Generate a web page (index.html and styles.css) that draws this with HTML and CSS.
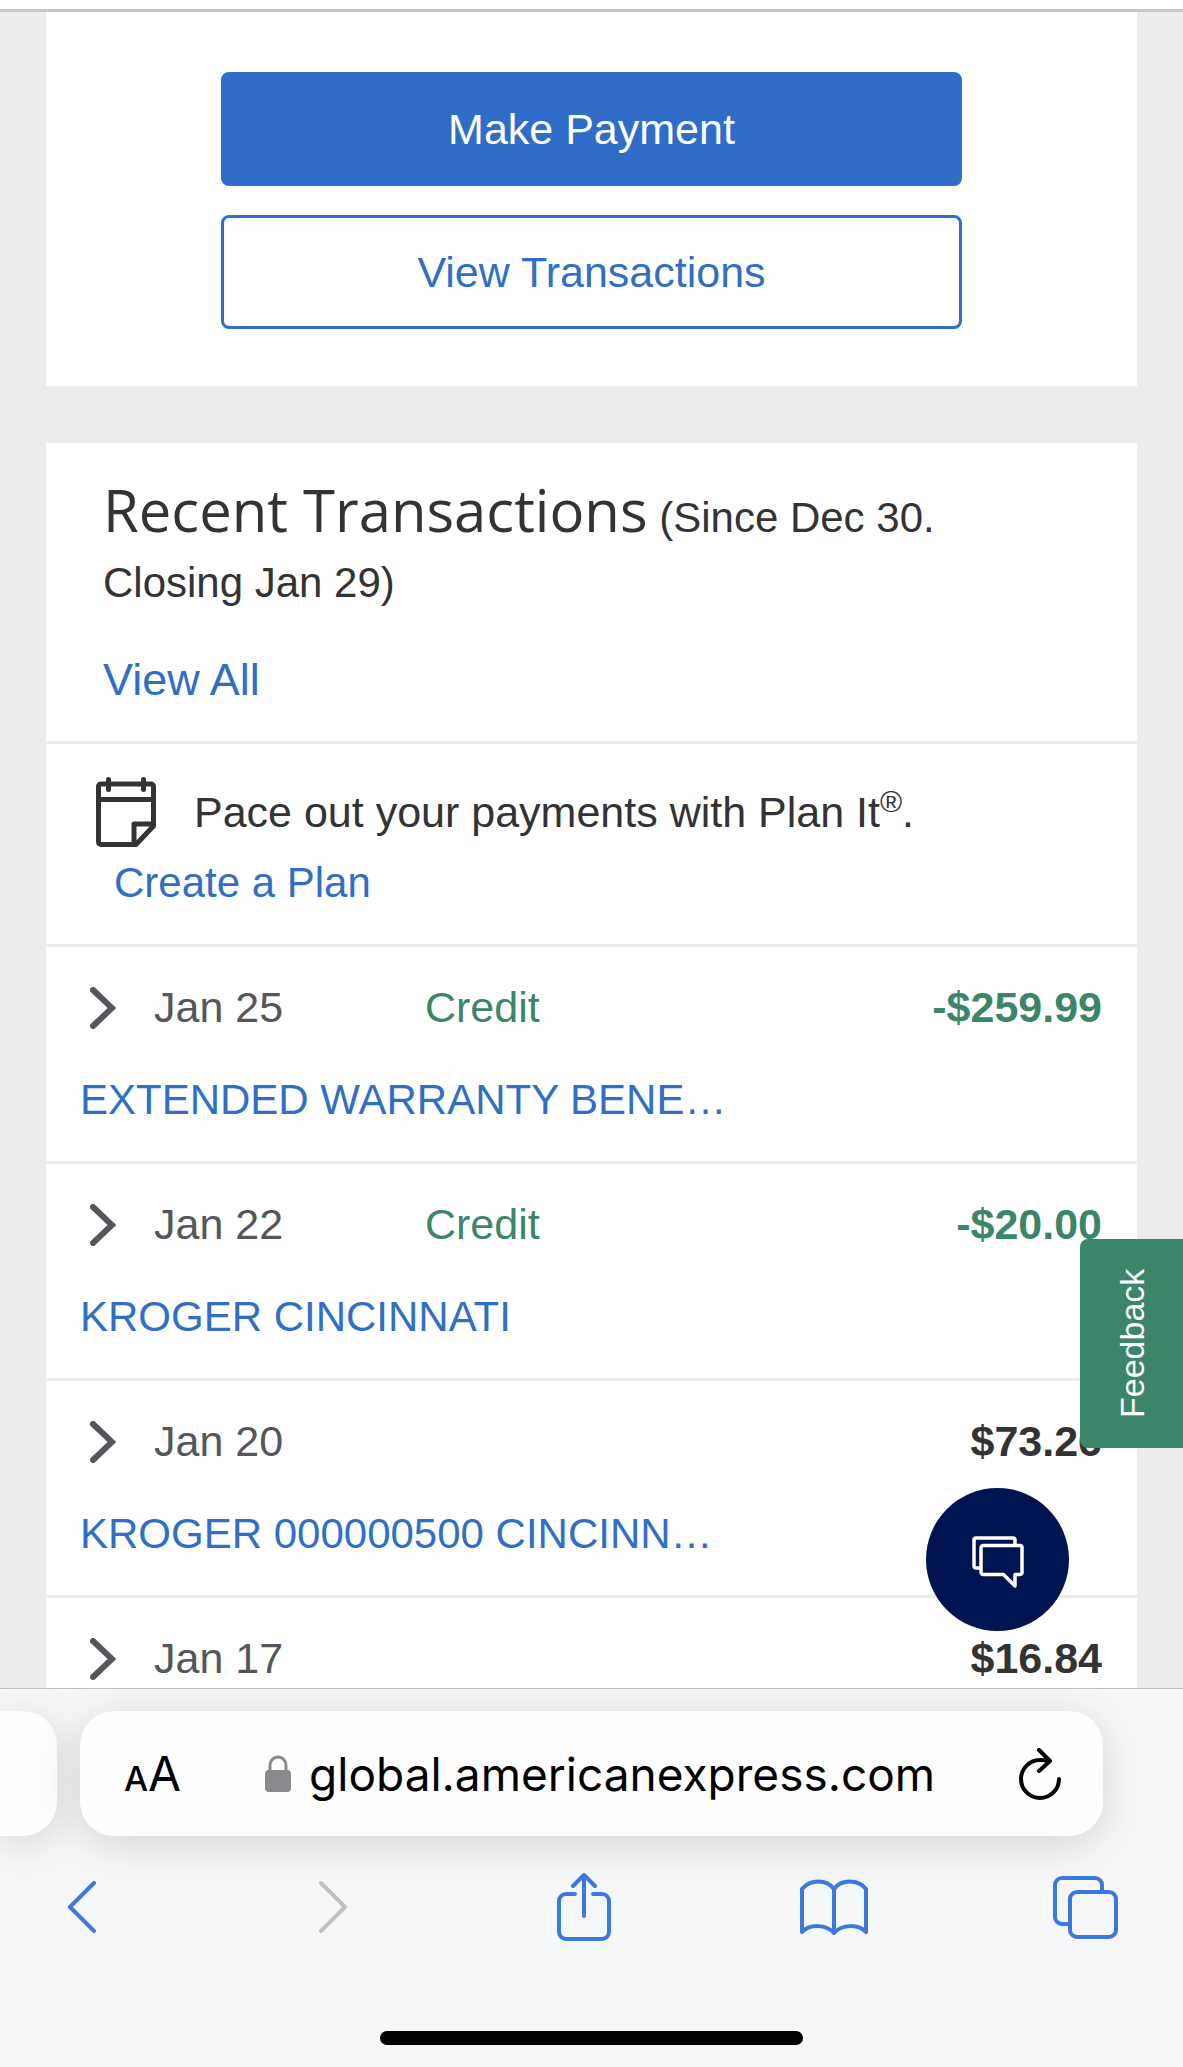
FILE: index.html
```
<!DOCTYPE html>
<html lang="en">
<head>
  <meta charset="UTF-8">
  <title>Recent Transactions</title>
  <link rel="stylesheet" href="styles.css">
</head>
<body>

  <div class="top-edge"></div>

  <main class="page">
    <!-- Payment buttons -->
    <section class="card actions">
      <button class="btn btn-primary">Make Payment</button>
      <button class="btn btn-outline">View Transactions</button>
    </section>

    <!-- Transactions -->
    <section class="card">
      <div class="card-header">
        <h2><span class="title">Recent Transactions</span> (Since Dec 30. Closing Jan 29)</h2>
        <a href="#">View All</a>
      </div>

      <div class="plan">
        <div class="plan-text">
          <svg class="plan-icon" viewBox="0 0 60 70" fill="none" stroke="#333" stroke-width="5" stroke-linejoin="round" stroke-linecap="round">
            <path d="M40 67.500H5a2.500 2.500 0 0 1-2.500-2.500V9.500A2.500 2.500 0 0 1 5 7h50a2.500 2.500 0 0 1 2.500 2.500V49L40 67.500H38V47H57"/>
            <path d="M3 22.500h54M12.500 2.500v10M47.500 2.500v10" />
          </svg>
          <span>Pace out your payments with Plan It<sup>®</sup>.</span>
        </div>
        <a class="plan-link" href="#">Create a Plan</a>
      </div>

      <div class="row">
        <div class="row-top">
          <button class="expand" aria-label="Expand Jan 25"><svg viewBox="0 0 26 42"><path d="M3 3l19 18L3 39"/></svg></button>
          <span class="date">Jan 25</span>
          <span class="credit">Credit</span>
          <span class="amount green">-$259.99</span>
        </div>
        <a href="#">EXTENDED WARRANTY BENE…</a>
      </div>

      <div class="row">
        <div class="row-top">
          <button class="expand" aria-label="Expand Jan 22"><svg viewBox="0 0 26 42"><path d="M3 3l19 18L3 39"/></svg></button>
          <span class="date">Jan 22</span>
          <span class="credit">Credit</span>
          <span class="amount green">-$20.00</span>
        </div>
        <a href="#">KROGER CINCINNATI</a>
      </div>

      <div class="row">
        <div class="row-top">
          <button class="expand" aria-label="Expand Jan 20"><svg viewBox="0 0 26 42"><path d="M3 3l19 18L3 39"/></svg></button>
          <span class="date">Jan 20</span>
          <span class="amount">$73.26</span>
        </div>
        <a href="#">KROGER 000000500 CINCINN…</a>
      </div>

      <div class="row">
        <div class="row-top">
          <button class="expand" aria-label="Expand Jan 17"><svg viewBox="0 0 26 42"><path d="M3 3l19 18L3 39"/></svg></button>
          <span class="date">Jan 17</span>
          <span class="amount">$16.84</span>
        </div>
      </div>
    </section>

    <button class="feedback">Feedback</button>
    <button class="chat" aria-label="Chat">
      <svg viewBox="0 0 52 52" fill="none" stroke="#fff" stroke-width="3.500" stroke-linejoin="round">
        <path d="M8 32H4a2 2 0 0 1-2-2V4A2 2 0 0 1 4 2h37A2 2 0 0 1 43 4v5"/>
        <path d="M11.500 9.500H48a2 2 0 0 1 2 2V36a2 2 0 0 1-2 2.500h-5V50L31.500 38.500h-20A2.500 2.500 0 0 1 9 36V12a2.500 2.500 0 0 1 2.500-2.500z"/>
      </svg>
    </button>
  </main>

  <!-- Browser bar -->
  <footer class="browser">
    <div class="tabs">
      <div class="prev-tab"></div>
      <div class="address">
        <button class="text-size" aria-label="Text size"><small>A</small>A</button>
        <div class="url">
          <svg class="lock" viewBox="0 0 26 37">
            <path d="M5 18V10a8 8 0 0 1 16 0v8" fill="none" stroke="#8a8a8e" stroke-width="3"/>
            <rect y="15" width="26" height="22" rx="4" fill="#8a8a8e"/>
          </svg>
          <span>global.americanexpress.com</span>
        </div>
        <button class="reload" aria-label="Reload">
          <svg viewBox="0 0 42 52" fill="none" stroke="#000" stroke-width="4" stroke-linecap="round" stroke-linejoin="round">
            <path d="M40 31a19 19 0 1 1-19-19q5 0 9 1M20 2l11 11-11 10"/>
          </svg>
        </button>
      </div>
    </div>

    <nav class="toolbar">
      <button aria-label="Back"><svg width="30" height="52" viewBox="0 0 30 52"><path d="M27 2L3 26l24 24"/></svg></button>
      <button class="disabled" aria-label="Forward"><svg width="30" height="52" viewBox="0 0 30 52"><path d="M3 2l24 24L3 50"/></svg></button>
      <button aria-label="Share"><svg width="54" height="68" viewBox="0 0 54 68"><path d="M18 21H9a7 7 0 0 0-7 7v31a7 7 0 0 0 7 7h36a7 7 0 0 0 7-7V28a7 7 0 0 0-7-7H36M27 43V2M16 13L27 2l11 11"/></svg></button>
      <button aria-label="Bookmarks"><svg width="68" height="56" viewBox="0 0 68 56"><path d="M34 10C27 0 10 0 2 10v43c8-8 24-8 32 1 8-9 24-9 32-1V10C58 0 41 0 34 10v44"/></svg></button>
      <button aria-label="Tabs"><svg width="65" height="63" viewBox="0 0 65 63"><path d="M16 48H9a7 7 0 0 1-7-7V9a7 7 0 0 1 7-7h33a7 7 0 0 1 7 7v6"/><rect x="17" y="16" width="46" height="45" rx="7"/></svg></button>
    </nav>
    <div class="home-bar"></div>
  </footer>

</body>
</html>
```
FILE: styles.css
```
* {
  box-sizing: border-box;
}
body {
  margin: 0;
  height: 100vh;
  display: flex;
  flex-direction: column;
  font-family: "Liberation Sans", Arial, sans-serif;
  font-size: 43px;
  line-height: 52px;
  color: #333;
  background: #ececec;
}
button {
  padding: 0;
  border: none;
  background: none;
  font: inherit;
  color: inherit;
  cursor: pointer;
}
a {
  color: #306fc5;
  text-decoration: none;
}
svg {
  display: block;
}
.top-edge {
  height: 12px;
  flex-shrink: 0;
  background: #fff;
  border-bottom: 3px solid #c8c8c8;
}
.page {
  position: relative;
  flex: 1;
  min-height: 0;
  overflow: hidden;
  padding: 0 46px;
}
.card {
  background: #fff;
  margin-bottom: 57px;
}
.actions {
  display: flex;
  flex-direction: column;
  align-items: center;
  gap: 29px;
  padding: 60px 0 57px;
}
.btn {
  width: 68%;
  height: 114px;
  border: 3px solid #306fc5;
  border-radius: 8px;
}
.btn-primary {
  background: #306dc8;
  border-color: #306dc8;
  color: #fff;
}
.btn-outline {
  color: #306fc5;
}
.card-header {
  padding: 34px 57px 35px;
}
.card-header h2 {
  margin: 0 0 39px;
  font-size: 42px;
  font-weight: normal;
  line-height: 65px;
}
.card-header a,
.row > a,
.plan-link {
  display: block;
}
.card-header a {
  font-size: 45px;
}
.title {
  font-family: "Open Sans", sans-serif;
  font-size: 58px;
}

/* Plan It */
.plan {
  padding: 33px 50px 35px;
  border-top: 3px solid #ececec;
}
.plan-text {
  display: flex;
  align-items: center;
  gap: 38px;
}
.plan-icon {
  width: 60px;
  height: 70px;
}
.plan-text sup {
  font-size: 30px;
  line-height: 0;
}
.plan-link {
  margin: 10px 0 0 18px;
  font-size: 42px;
}

/* Transaction rows */
.row {
  padding: 34px 35px 35px 34px;
  border-top: 3px solid #ececec;
}
.row > a {
  font-size: 42px;
}
.row-top {
  display: flex;
  align-items: center;
  margin-bottom: 41px;
}
.expand {
  width: 74px;
  padding: 2px 0 0 10px;
}
.expand svg {
  width: 26px;
  height: 42px;
  fill: none;
  stroke: #53565a;
  stroke-width: 6;
  stroke-linecap: round;
}
.date {
  width: 271px;
  color: #53565a;
}
.credit,
.green {
  color: #3c8569;
}
.amount {
  margin-left: auto;
  font-weight: bold;
}

/* Floating buttons */
.feedback {
  position: absolute;
  right: 0;
  bottom: 240px;
  width: 103px;
  height: 209px;
  border-radius: 0 8px 8px 0;
  background: #3c8569;
  color: #fff;
  font-size: 34px;
  writing-mode: vertical-rl;
  transform: rotate(180deg);
}
.chat {
  position: absolute;
  right: 114px;
  bottom: 57px;
  width: 143px;
  height: 143px;
  padding-top: 4px;
  border-radius: 50%;
  background: #001452;
}
.chat svg {
  width: 52px;
  height: 52px;
  margin: 0 auto;
}

/* Browser bar */
.browser {
  flex-shrink: 0;
  overflow: hidden;
  background: #f6f7f9;
  border-top: 1px solid #bdbdbf;
  padding: 22px 0;
  font-family: Inter, sans-serif;
  color: #000;
}
.tabs {
  display: flex;
  gap: 23px;
  padding-right: 80px;
}
.prev-tab,
.address {
  height: 125px;
  background: #fdfdfe;
  box-shadow: 0 8px 44px rgba(0, 0, 0, 0.14);
}
.prev-tab {
  width: 57px;
  border-radius: 0 34px 34px 0;
}
.address {
  flex: 1;
  display: flex;
  align-items: center;
  justify-content: space-between;
  padding: 0 42px 0 44px;
  border-radius: 34px;
}
.text-size {
  font-size: 48px;
}
.text-size small {
  font-size: 34px;
  font-weight: 500;
  line-height: 1;
}
.url {
  display: flex;
  align-items: center;
  gap: 18px;
  font-size: 46px;
}
.lock {
  width: 26px;
  height: 37px;
}
.reload svg {
  width: 42px;
  height: 52px;
}
.toolbar {
  display: flex;
  align-items: center;
  justify-content: space-between;
  padding: 37px 64px 0 48px;
}
.toolbar button {
  width: 68px;
}
.toolbar svg {
  margin: 0 auto;
  fill: none;
  stroke: #3b78e0;
  stroke-width: 4;
  stroke-linecap: round;
  stroke-linejoin: round;
}
.toolbar .disabled svg {
  stroke: #bfc0c2;
}
.home-bar {
  width: 423px;
  height: 14px;
  margin: 90px auto 0;
  border-radius: 7px;
  background: #000;
}
```
